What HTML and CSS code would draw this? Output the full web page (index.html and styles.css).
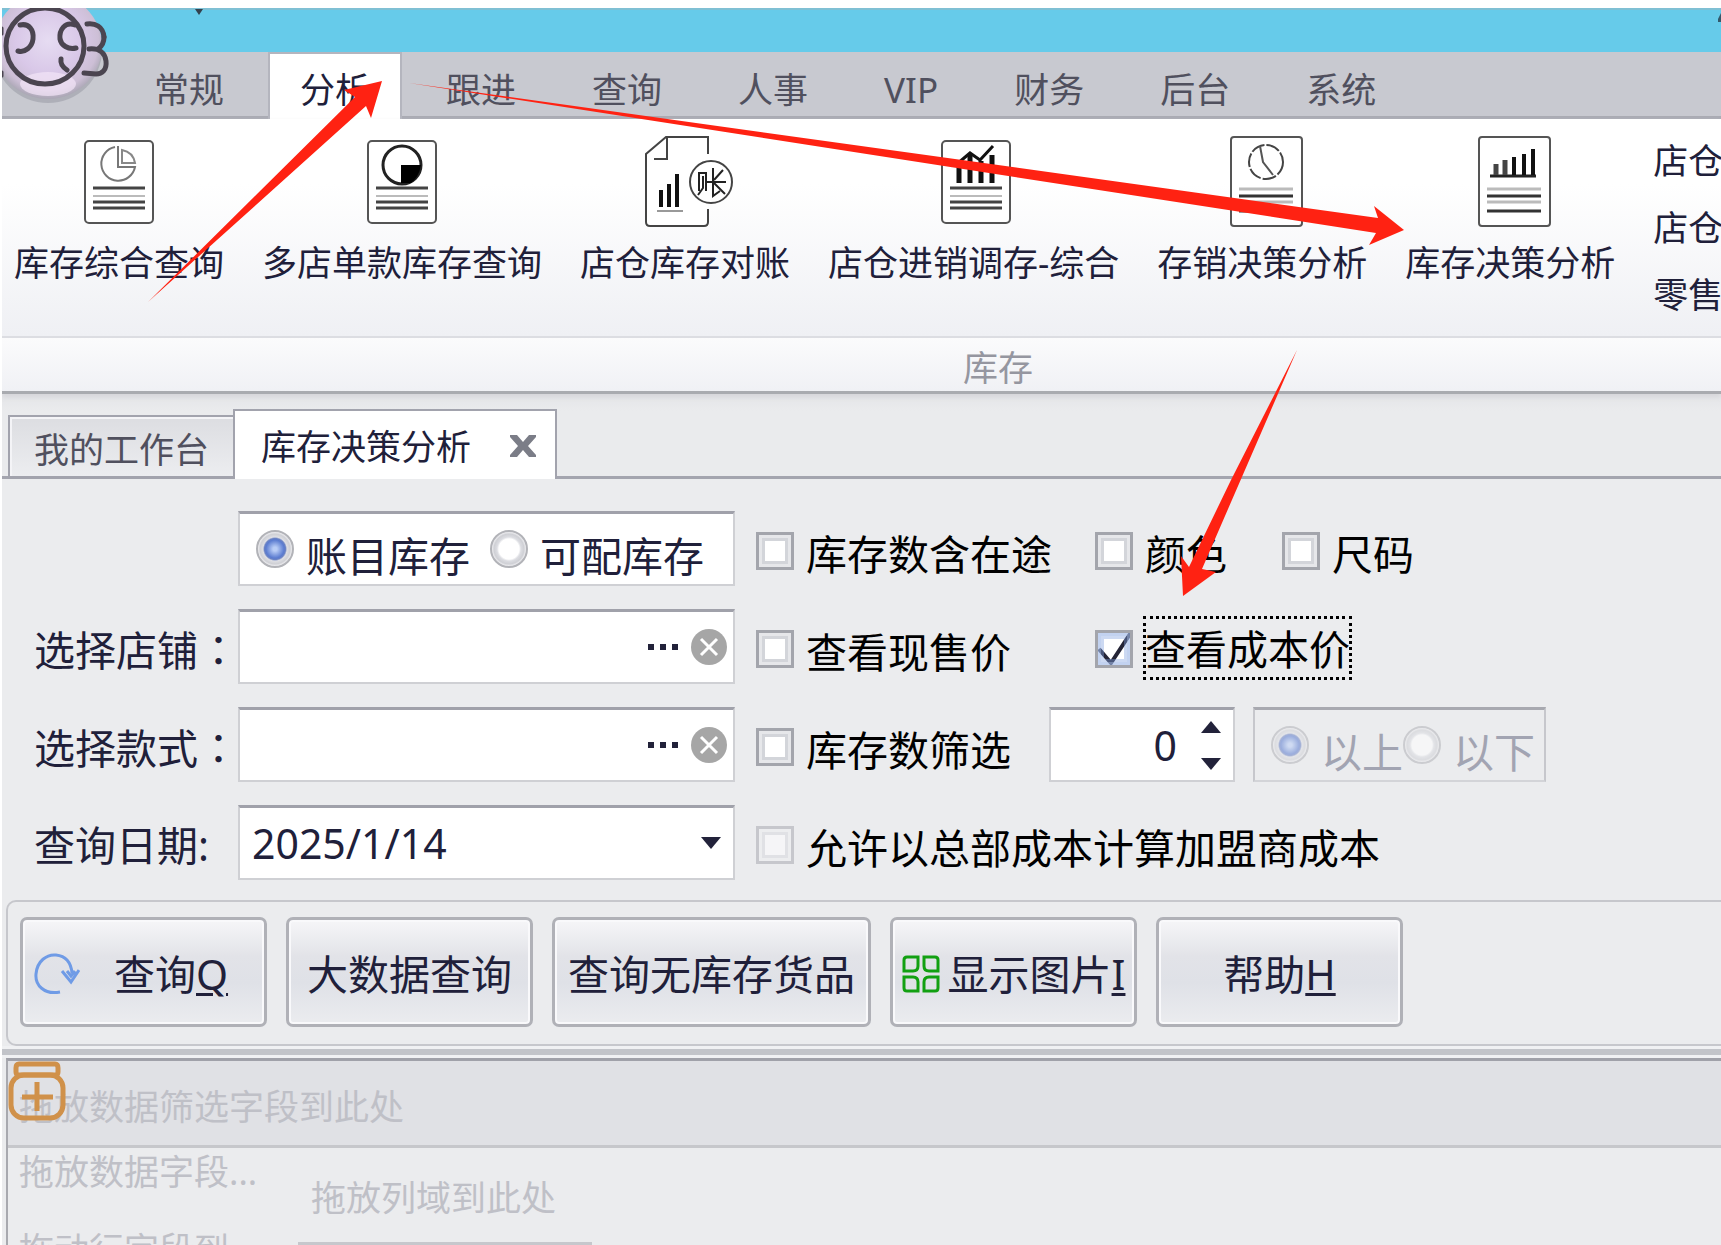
FILE: index.html
```html
<!DOCTYPE html>
<html lang="zh-CN">
<head>
<meta charset="utf-8">
<title>库存决策分析</title>
<link rel="stylesheet" href="styles.css">
</head>
<body>
<header class="titlebar">
  <svg class="title-mark" width="10" height="6" viewBox="0 0 10 6" aria-hidden="true"><path d="M1 0h8L5 6z" fill="#33414e"/></svg>
  <svg class="title-mark" width="3" height="18" viewBox="0 0 3 18" aria-hidden="true"><path d="M3 4v9H0v-3z" fill="#33586a"/></svg>
</header>

<svg class="logo" width="112" height="102" viewBox="0 0 112 102" aria-hidden="true">
  <defs>
    <radialGradient id="orb" cx="50%" cy="45%" r="55%">
      <stop offset="0" stop-color="#e6dcf2"/>
      <stop offset=".55" stop-color="#d9c8e8"/>
      <stop offset=".85" stop-color="#cdbfd6"/>
      <stop offset="1" stop-color="#aaa6b4"/>
    </radialGradient>
  </defs>
  <ellipse cx="46" cy="42" rx="54" ry="53" fill="#8f909c" opacity=".45"/>
  <ellipse cx="46" cy="38" rx="54" ry="53" fill="url(#orb)"/>
  <ellipse cx="46" cy="76" rx="28" ry="12" fill="#f3e6f8" opacity=".7"/>
  <g fill="none" stroke="#4b4550" stroke-width="5" stroke-linecap="round">
    <ellipse cx="43" cy="38" rx="39" ry="38"/>
    <path d="M18 17c9-2 14 5 13 14-1 8-8 14-15 12"/>
    <path d="M73 17c-10-4-16 5-15 14 1 6 8 11 16 9"/>
    <path d="M59 51c-1 6 3 9 6 11"/>
    <path d="M85 16c8-1 16 2 17 13"/>
    <path d="M87 41c10-1 16 4 17 12 1 9-4 13-10 13l-12-1"/>
    <path d="M102 29c0 6-3 10-6 12"/>
    <path d="M0 20v6M0 64v4" stroke-width="3"/>
  </g>
</svg>

<nav class="ribbon-tabs">
  <a class="ribbon-tab" href="#">常规</a>
  <a class="ribbon-tab is-active" href="#">分析</a>
  <a class="ribbon-tab" href="#">跟进</a>
  <a class="ribbon-tab" href="#">查询</a>
  <a class="ribbon-tab" href="#">人事</a>
  <a class="ribbon-tab" href="#">VIP</a>
  <a class="ribbon-tab" href="#">财务</a>
  <a class="ribbon-tab" href="#">后台</a>
  <a class="ribbon-tab" href="#">系统</a>
</nav>

<section class="ribbon">
  <div class="ribbon-items">
    <button class="ribbon-item" type="button">
      <svg width="72" height="92" viewBox="0 0 72 92" fill="none" stroke="#555">
        <rect x="2" y="5" width="68" height="82" rx="4" fill="#fff" stroke-width="2"/>
        <path d="M32 11a17 17 0 1 0 20 20H35V10" stroke="#777" stroke-width="2"/>
        <path d="M39 14q11 2 13 13H39z" stroke="#888" stroke-width="2"/>
        <path d="M10 52h52M10 66h52M10 72h52" stroke="#444" stroke-width="3"/><path d="M10 60h52" stroke="#bbb" stroke-width="2"/>
      </svg>
      <span>库存综合查询</span>
    </button>
    <button class="ribbon-item" type="button">
      <svg width="72" height="92" viewBox="0 0 72 92" fill="none" stroke="#555">
        <rect x="2" y="5" width="68" height="82" rx="4" fill="#fff" stroke-width="2"/>
        <circle cx="36" cy="29" r="19" stroke="#222" stroke-width="3"/>
        <path d="M35 29h20q-2 12-10 18H35z" fill="#000" stroke="none"/>
        <path d="M10 52h52M10 66h52M10 72h52" stroke="#444" stroke-width="3"/><path d="M10 60h52" stroke="#bbb" stroke-width="2"/>
      </svg>
      <span>多店单款库存查询</span>
    </button>
    <button class="ribbon-item" type="button">
      <svg width="100" height="92" viewBox="-8 0 100 92" fill="none" stroke="#444" stroke-width="2">
        <path d="M65 18V1H23L3 18v68q0 4 4 4h54q4 0 4-4V73" fill="#fff"/>
        <path d="M24 2v21H11"/>
        <circle cx="68" cy="46" r="21" fill="#fff"/>
        <path d="M18 54v17M26 48v23M34 38v33" stroke="#111" stroke-width="4"/>
        <path d="M14 75h26" stroke="#999"/>
        <path d="M56 55V37h7v18M60 40v12l-5 7M62 46h21M70 32v28l7-5M80 34l-9 10M71 47l11 11" stroke="#222"/>
      </svg>
      <span>店仓库存对账</span>
    </button>
    <button class="ribbon-item" type="button">
      <svg width="76" height="92" viewBox="-4 0 76 92" fill="none" stroke="#555">
        <rect x="2" y="5" width="68" height="82" rx="4" fill="#fff" stroke-width="2"/>
        <path d="M19 47V27M30 47V19M41 47V25M52 47V19" stroke="#111" stroke-width="5"/>
        <path d="M17 28l13-11 10 7 13-14" stroke="#111" stroke-width="3"/>
        <path d="M10 52h52M10 66h52M10 72h52" stroke="#444" stroke-width="3"/><path d="M10 60h52" stroke="#bbb" stroke-width="2"/>
      </svg>
      <span>店仓进销调存-综合</span>
    </button>
    <button class="ribbon-item" type="button">
      <svg width="84" height="92" viewBox="-10 0 84 92" fill="none" stroke="#555">
        <rect x="1" y="1" width="71" height="89" rx="3" fill="#fff" stroke-width="2"/>
        <circle cx="36" cy="26" r="17" stroke="#444" stroke-width="2" stroke-dasharray="14 2"/>
        <path d="M30 10l3 16 10 13" stroke="#555" stroke-width="2"/>
        <path d="M9 53h54M9 66h54" stroke="#bbb" stroke-width="3"/><path d="M9 60h54M9 75h54" stroke="#333" stroke-width="3"/>
      </svg>
      <span>存销决策分析</span>
    </button>
    <button class="ribbon-item" type="button">
      <svg width="84" height="92" viewBox="-10 0 84 92" fill="none" stroke="#555">
        <rect x="1" y="1" width="71" height="89" rx="3" fill="#fff" stroke-width="2"/>
        <path d="M12 40h46" stroke="#222" stroke-width="3"/>
        <path d="M18 39V28M27 39V24" stroke="#444" stroke-width="5"/><path d="M36 39V21M46 39V18M55 39V13" stroke="#111" stroke-width="4"/>
        <path d="M9 53h54M9 66h54" stroke="#bbb" stroke-width="3"/><path d="M9 60h54M9 75h54" stroke="#333" stroke-width="3"/>
      </svg>
      <span>库存决策分析</span>
    </button>
    <div class="ribbon-list">
      <a href="#">店仓</a>
      <a href="#">店仓</a>
      <a href="#">零售</a>
    </div>
  </div>
  <div class="ribbon-caption">库存</div>
</section>

<nav class="doc-tabs">
  <a class="doc-tab" href="#">我的工作台</a>
  <div class="doc-tab is-active">
    <span>库存决策分析</span>
    <button class="tab-close" type="button" aria-label="关闭">
      <svg width="28" height="22" viewBox="0 0 28 22"><path d="M1 0h7l6 7 6-7h7v2l-8 9 8 9v2h-7l-6-7-6 7H1v-2l8-9-8-9z" fill="#7b7d87"/></svg>
    </button>
  </div>
</nav>

<form class="filters">
  <div class="row">
    <span class="row-label"></span>
    <div class="field radios" role="radiogroup">
      <label class="radio"><input type="radio" name="kind" checked><span>账目库存</span></label>
      <label class="radio"><input type="radio" name="kind"><span>可配库存</span></label>
    </div>
    <label class="check wide"><input type="checkbox"><span>库存数含在途</span></label>
    <label class="check medium"><input type="checkbox"><span>颜色</span></label>
    <label class="check"><input type="checkbox"><span>尺码</span></label>
  </div>
  <div class="row">
    <label class="row-label" for="shop">选择店铺<span class="colon" lang="zh-TW">：</span></label>
    <div class="field">
      <input class="text" id="shop" type="text">
      <button class="more" type="button" aria-label="选择"><i></i><i></i><i></i></button>
      <button class="clear" type="button" aria-label="清除"><svg width="36" height="36" viewBox="0 0 36 36"><circle cx="18" cy="18" r="18" fill="#a6a6a6"/><path d="M10 10l16 16M26 10L10 26" stroke="#fff" stroke-width="3"/></svg></button>
    </div>
    <label class="check wide"><input type="checkbox"><span>查看现售价</span></label>
    <label class="check"><input type="checkbox" checked><span class="focused">查看成本价</span></label>
  </div>
  <div class="row">
    <label class="row-label" for="style">选择款式<span class="colon" lang="zh-TW">：</span></label>
    <div class="field">
      <input class="text" id="style" type="text">
      <button class="more" type="button" aria-label="选择"><i></i><i></i><i></i></button>
      <button class="clear" type="button" aria-label="清除"><svg width="36" height="36" viewBox="0 0 36 36"><circle cx="18" cy="18" r="18" fill="#a6a6a6"/><path d="M10 10l16 16M26 10L10 26" stroke="#fff" stroke-width="3"/></svg></button>
    </div>
    <label class="check"><input type="checkbox"><span>库存数筛选</span></label>
    <div class="spin">
      <input class="text" type="text" inputmode="numeric" value="0" aria-label="库存数">
      <div class="spin-buttons">
        <button type="button" aria-label="增加"><svg width="20" height="12" viewBox="0 0 20 12"><path d="M10 0l10 12H0z" fill="#22223a"/></svg></button>
        <button type="button" aria-label="减少"><svg width="20" height="12" viewBox="0 0 20 12"><path d="M0 0h20L10 12z" fill="#22223a"/></svg></button>
      </div>
    </div>
    <div class="radios limits" role="radiogroup">
      <label class="radio"><input type="radio" name="limit" checked disabled><span>以上</span></label>
      <label class="radio"><input type="radio" name="limit" disabled><span>以下</span></label>
    </div>
  </div>
  <div class="row">
    <label class="row-label" for="date">查询日期:</label>
    <div class="field">
      <select class="text" id="date"><option>2025/1/14</option></select>
      <svg class="caret" width="20" height="12" viewBox="0 0 20 12" aria-hidden="true"><path d="M0 0h20L10 12z" fill="#22223a"/></svg>
    </div>
    <label class="check"><input type="checkbox" disabled><span>允许以总部成本计算加盟商成本</span></label>
  </div>
</form>

<div class="actions">
  <button class="action spaced" type="button">
    <svg width="46" height="42" viewBox="0 0 46 42" fill="none" stroke="#6f9be6" stroke-width="3"><path d="M26 39C10 42 1 32 2 21 3 8 13 1 22 2c10 1 15 8 16 18"/><path d="M28 18l9 11 8-12M33 18l4 5 4-5" /></svg>
    <span>查询<u>Q</u></span>
  </button>
  <button class="action" type="button">大数据查询</button>
  <button class="action" type="button">查询无库存货品</button>
  <button class="action snug" type="button">
    <svg width="38" height="38" viewBox="0 0 38 38" fill="none" stroke="#12a012" stroke-width="3"><path d="M5 2h11v9q0 5-5 5H2V5q0-3 3-3zM22 2h11q3 0 3 3v11H27q-5 0-5-5zM2 22h9q5 0 5 5v9H5q-3 0-3-3zM27 22h9v11q0 3-3 3H22v-9q0-5 5-5z"/></svg>
    <span>显示图片<u>I</u></span>
  </button>
  <button class="action" type="button"><span>帮助<u>H</u></span></button>
</div>
<div class="splitter"></div>

<main class="pivot">
  <div class="pivot-filter">拖放数据筛选字段到此处
    <svg class="pivot-icon" width="58" height="60" viewBox="1 0 58 60" fill="none" stroke="#d0914a" stroke-width="5" aria-hidden="true"><path d="M12 3h36q3 0 3 4v4q0 3-3 3H12q-3 0-3-3V7q0-4 3-4z"/><rect x="4" y="14" width="52" height="43" rx="13"/><path d="M30 21v29M15 36h31"/></svg>
  </div>
  <div class="pivot-body">
    <div class="pivot-side">
      <span>拖放数据字段...</span>
      <span>拖动行字段到</span>
    </div>
    <div class="pivot-main">
      <span>拖放列域到此处</span>
      <div class="pivot-cell"></div>
    </div>
  </div>
</main>

<svg class="arrows" width="1721" height="1245" viewBox="0 0 1721 1245" fill="#ff2212" aria-hidden="true">
  <path d="M148 302L355 97l-11-7 38-9-11 37-5-12z"/>
  <path d="M409 83l969 135-4-12 30 24-35 15 7-12z"/>
  <path d="M1297 350l-95 219 14 3-33 24-2-40 8 11 42-87z"/>
</svg>
</body>
</html>
```
FILE: styles.css
```css
* { box-sizing: border-box; }

body {
  margin: 0;
  border: solid #fff;
  border-width: 8px 0 0 2px;
  height: 100vh;
  display: flex;
  flex-direction: column;
  position: relative;
  overflow: hidden;
  background: #ebecee;
  color: #20203a;
  font: 35px/40px "Noto Sans", "Noto Sans CJK SC", sans-serif;
}

a { color: inherit; text-decoration: none; }
button, input, select { font: inherit; color: inherit; }
button { padding: 0; border: 0; background: none; }
svg { display: block; flex: none; }

.titlebar {
  flex: none;
  height: 44px;
  padding-left: 192px;
  display: flex;
  justify-content: space-between;
  background: #66cbea;
  border-top: 2px solid #7fc0d4;
}
.title-mark { margin-top: -1px; }

.logo { position: absolute; left: 0; top: 0; z-index: 1; }

.ribbon-tabs {
  flex: none;
  height: 67px;
  padding-left: 114px;
  display: flex;
  background: #c8c9d0;
  box-shadow: inset 0 -3px #a9aab3;
}
.ribbon-tab {
  margin: 0 8px;
  padding: 18px 30px 0;
  color: #50505e;
}
.ribbon-tab.is-active {
  background: #fff;
  color: #20203a;
  border-top: 2px solid #b4b5be;
  padding-top: 16px;
  box-shadow: -2px 0 #b4b5be, 2px 0 #b4b5be;
}

.ribbon {
  flex: none;
  border-bottom: 3px solid #a9abb0;
  box-shadow: 0 3px 5px #d5d6da;
  position: relative;
}
.ribbon-items {
  height: 217px;
  padding: 17px 0 0 12px;
  display: flex;
  gap: 38px;
  overflow: hidden;
  background: linear-gradient(#fff 30%, #eff0f4);
}
.ribbon-item {
  flex: none;
  display: flex;
  flex-direction: column;
  align-items: center;
  gap: 15px;
  height: 147px;
  white-space: nowrap;
}
.ribbon-list {
  flex: none;
  padding-top: 5px;
  display: flex;
  flex-direction: column;
  gap: 27px;
}
.ribbon-caption {
  height: 55px;
  padding: 10px 0 0 961px;
  border-top: 2px solid #dcdde2;
  background: linear-gradient(#fbfbfc, #f0f1f5);
  color: #9596a0;
}

.doc-tabs {
  flex: none;
  height: 85px;
  padding: 15px 0 0 6px;
  display: flex;
  align-items: flex-end;
  background: linear-gradient(#e4e5e8, #eaebed 20%);
  box-shadow: inset 0 -3px #a4a5af;
}
.doc-tab {
  height: 64px;
  padding: 13px 24px 0;
  border: 2px solid #a2a3ad;
  border-bottom-width: 3px;
  border-right: 0;
  background: linear-gradient(#dcdde1, #ecedf0);
  box-shadow: inset 2px 2px #f4f4f7;
  color: #50505e;
}
.doc-tab.is-active {
  height: 70px;
  padding: 16px 18px 0 26px;
  display: flex;
  align-items: flex-start;
  gap: 38px;
  border-right: 2px solid #a2a3ad;
  border-bottom: 0;
  background: #fff;
  box-shadow: none;
  color: #20203a;
}
.tab-close { padding: 8px 0; }

.filters {
  flex: none;
  padding: 32px 0 20px;
  display: grid;
  gap: 23px;
  font-size: 41px;
  line-height: 48px;
}
.row {
  height: 75px;
  padding-left: 32px;
  display: flex;
  align-items: center;
  white-space: nowrap;
}
.row-label { flex: none; width: 204px; padding-top: 4px; }
.colon { font-family: "Noto Sans CJK TC", sans-serif; }

.field, .spin, .limits {
  flex: none;
  height: 75px;
  display: flex;
  align-items: center;
  border: 2px solid #cfd0d4;
  border-top: 3px solid #a0a1aa;
  background: #fff;
}
.field { width: 497px; margin-right: 21px; }
.text {
  flex: 1;
  min-width: 0;
  height: 70px;
  padding: 0 0 0 12px;
  border: 0;
  outline: 0;
  background: none;
  appearance: none;
}
.more { display: flex; gap: 6px; margin-right: 13px; }
.more i { width: 6px; height: 6px; background: #22223a; }
.clear { margin-right: 6px; }
.caret { margin-right: 12px; }

.radios { padding-left: 16px; gap: 20px; }
.radio { display: flex; align-items: center; gap: 12px; }
.radio span { padding-top: 14px; }
.radio input {
  appearance: none;
  width: 38px;
  height: 38px;
  margin: 0;
  border: 2px solid #b2b3b8;
  border-radius: 50%;
  background: radial-gradient(circle, #fff 42%, #dcdde2 50%, #cfd0d5 62%, #ececef 70%);
}
.radio input:checked {
  background: radial-gradient(circle at 50% 50%, #b9cdf6 8%, #5a7bd0 38%, #6a82c4 44%, #dedfe4 50%, #cfd0d5 62%, #ececef 70%);
}

.check { flex: none; display: flex; align-items: center; gap: 12px; color: #000; }
.check.wide { width: 339px; }
.check.medium { width: 187px; }
.check span { padding-top: 11px; }
.check .focused {
  height: 64px;
  margin: 3px -2px 0;
  padding: 9px 2px 0;
  outline: 3px dotted #000;
  outline-offset: -3px;
}
.check input {
  appearance: none;
  width: 38px;
  height: 38px;
  margin: 4px 0 0;
  border: 3px solid #a3a5ac;
  background: #fff;
  box-shadow: inset 0 0 0 3px #e6e7ea, inset 0 0 0 6px #d3d5da;
}
.check input:checked {
  background: #fff url("data:image/svg+xml,%3Csvg xmlns='http://www.w3.org/2000/svg' viewBox='0 0 38 38'%3E%3Cpath d='M4 19l12 14L37 1' fill='none' stroke='%23242436' stroke-width='4'/%3E%3C/svg%3E") center / 38px 38px no-repeat border-box;
  box-shadow: inset 0 0 0 3px #b5c8ee66, inset 0 0 0 6px #7f9fdf66;
}
.check input:disabled { border-color: #c6c7cc; background: #f5f5f7; box-shadow: inset 0 0 0 3px #ecedef, inset 0 0 0 6px #e0e1e5; }

.spin { width: 186px; margin: 0 18px 0 38px; }
.spin .text { padding: 0 24px 0 0; text-align: right; }
.spin-buttons { display: grid; gap: 25px; margin-right: 12px; }
.limits { width: 293px; gap: 0; background: none; border-color: #a8a9b0 #c6c7cc #d3d4d8; color: #a2a4b2; }
.limits input { opacity: .55; }

.actions {
  flex: none;
  height: 146px;
  margin-left: 4px;
  padding: 15px 12px;
  display: flex;
  gap: 19px;
  border: 2px solid #c6c7cc;
  border-right: 0;
  border-radius: 10px 0 0 10px;
  font-size: 41px;
  line-height: 48px;
}
.action {
  flex: none;
  min-width: 247px;
  height: 110px;
  padding: 4px 13px 0;
  display: flex;
  align-items: center;
  justify-content: center;
  gap: 8px;
  border: 3px solid #b0b1b7;
  border-radius: 7px;
  background: linear-gradient(#f6f6f8, #e2e3e8 35%, #dfe1e7 60%, #ebecef);
  box-shadow: inset 0 0 0 2px #f9f9fb;
  white-space: nowrap;
}
.action.spaced { justify-content: flex-start; gap: 34px; padding-left: 11px; }
.action.snug { padding-left: 8px; padding-right: 8px; }
.action u { text-decoration-thickness: 3px; text-underline-offset: 3px; }

.splitter {
  flex: none;
  height: 12px;
  border: solid #f0f1f3;
  border-width: 3px 0;
  background: #c2c4c9;
}

.pivot {
  flex: 1;
  min-height: 0;
  margin-left: 4px;
  border-left: 2px solid #a8a9af;
  border-top: 3px solid #a0a1a9;
  color: #bfc0c7;
  overflow: hidden;
}
.pivot-filter {
  position: relative;
  height: 87px;
  padding: 26px 0 0 11px;
  border-bottom: 3px solid #c6c7cb;
  background: #e0e1e5;
}
.pivot-icon { position: absolute; left: 0; top: 0; }
.pivot-body { display: flex; }
.pivot-side { width: 290px; padding: 4px 0 0 11px; display: grid; align-content: start; gap: 38px; }
.pivot-main { padding: 30px 0 0; }
.pivot-main span { padding-left: 13px; }
.pivot-cell { width: 294px; height: 60px; margin-top: 24px; border: 3px solid #c6c7cc; }

.arrows { position: absolute; left: -2px; top: -8px; z-index: 2; pointer-events: none; }
```
